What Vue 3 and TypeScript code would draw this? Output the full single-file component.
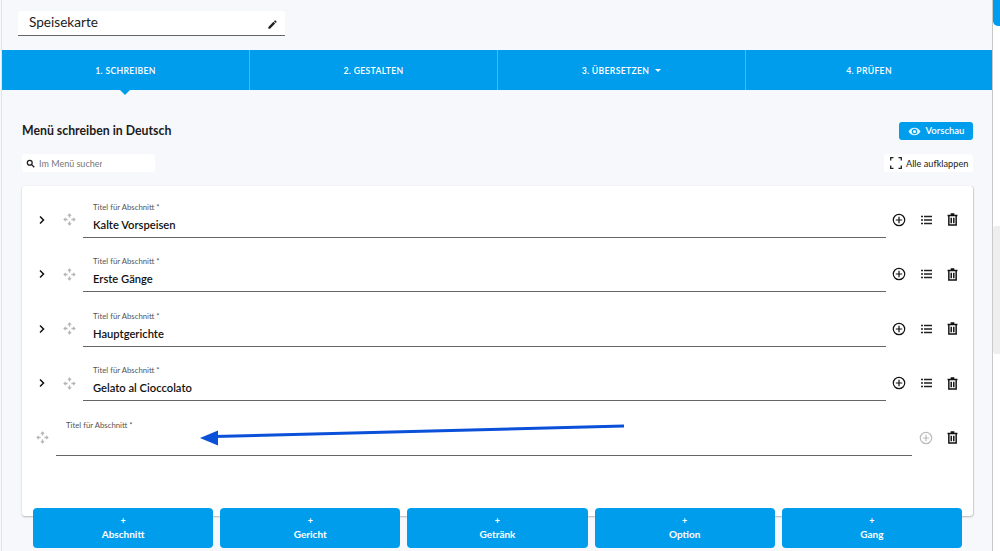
<script setup lang="ts">
const tabs = ['1. SCHREIBEN', '2. GESTALTEN', '3. ÜBERSETZEN', '4. PRÜFEN']
const sections = ['Kalte Vorspeisen', 'Erste Gänge', 'Hauptgerichte', 'Gelato al Cioccolato']
const actions = ['Abschnitt', 'Gericht', 'Getränk', 'Option', 'Gang']
</script>

<template>
  <div class="page">
    <main class="main">
      <div class="title-field">
        <span class="title-text">Speisekarte</span>
        <svg class="pencil" viewBox="0 0 24 24" width="11" height="11"><path d="M3 17.250V21h3.750L17.810 9.940l-3.750-3.750L3 17.250zM20.710 7.040a1 1 0 0 0 0-1.410l-2.340-2.340a1 1 0 0 0-1.410 0l-1.830 1.830 3.750 3.750 1.830-1.830z" fill="#222"/></svg>
      </div>

      <nav class="tabs">
        <div v-for="(t, i) in tabs" :key="t" class="tab">
          {{ t }}
          <i v-if="i === 2" class="caret"></i>
          <i v-if="i === 0" class="pointer"></i>
        </div>
      </nav>

      <div class="head-row">
        <h1>Menü schreiben in Deutsch</h1>
        <button class="preview">
          <svg viewBox="0 0 24 24" width="13" height="13"><path d="M12 5C7 5 3 8 1 12c2 4 6 7 11 7s9-3 11-7c-2-4-6-7-11-7zm0 12a5 5 0 1 1 0-10 5 5 0 0 1 0 10zm0-8a3 3 0 1 0 0 6 3 3 0 0 0 0-6z" fill="#e4f5fe"/></svg>
          <span class="lift">Vorschau</span>
        </button>
      </div>

      <div class="tool-row">
        <div class="search">
          <svg viewBox="0 0 24 24" width="9" height="9"><circle cx="10" cy="10" r="6.500" fill="none" stroke="#222" stroke-width="3.400"/><path d="M15 15l7 7" stroke="#222" stroke-width="3.600"/></svg>
          <span class="search-text">Im Menü suchen</span>
        </div>
        <div class="expand">
          <svg viewBox="0 0 12 12" width="12" height="12"><path d="M.7 3.500V.7h2.800M8.500.7h2.800v2.800M11.300 8.500v2.800H8.500M3.500 11.300H.7V8.500" fill="none" stroke="#222" stroke-width="1.300"/></svg>
          Alle aufklappen
        </div>
      </div>

      <section class="card">
        <div v-for="s in sections" :key="s" class="row">
          <svg class="chev" viewBox="0 0 8 10" width="8" height="10"><path d="M2 1.500l3.500 3.500-3.500 3.500" fill="none" stroke="#111" stroke-width="1.500"/></svg>
          <svg class="move" viewBox="0 0 14 14" width="13" height="13"><path d="M7 .3L4.600 2.900h1.600v2h1.600v-2h1.600zM7 13.700l-2.400-2.600h1.600v-2h1.600v2h1.600zM.3 7l2.600-2.400v1.600h2v1.600h-2v1.600zM13.700 7l-2.600-2.400v1.600h-2v1.600h2v1.600z" fill="#b4b4b4"/></svg>
          <div class="field">
            <label>Titel für Abschnitt *</label>
            <div class="value">{{ s }}</div>
          </div>
          <svg class="ic plus" viewBox="0 0 14 14" width="14" height="14"><circle cx="7" cy="7" r="5.700" fill="none" stroke="#111" stroke-width="1.200"/><path d="M7 3.800v6.400M3.800 7h6.400" stroke="#111" stroke-width="1.200"/></svg>
          <svg class="ic list" viewBox="0 0 12 10" width="12" height="10"><path d="M1 1.500h2M4 1.500h8M1 5h2M4 5h8M1 8.500h2M4 8.500h8" stroke="#222" stroke-width="1.500"/></svg>
          <svg class="ic trash" viewBox="0 0 12 14" width="11" height="13"><path d="M4 1h4M.6 2.600h10.800M2 3v9.900h8V3M4.600 5v6M7.400 5v6" fill="none" stroke="#111" stroke-width="1.600"/></svg>
        </div>

        <div class="row new">
          <svg class="move" viewBox="0 0 14 14" width="13" height="13"><path d="M7 .3L4.600 2.900h1.600v2h1.600v-2h1.600zM7 13.700l-2.400-2.600h1.600v-2h1.600v2h1.600zM.3 7l2.600-2.400v1.600h2v1.600h-2v1.600zM13.700 7l-2.600-2.400v1.600h-2v1.600h2v1.600z" fill="#b4b4b4"/></svg>
          <div class="field">
            <label>Titel für Abschnitt *</label>
            <div class="value"></div>
          </div>
          <svg class="ic plus" viewBox="0 0 14 14" width="14" height="14"><circle cx="7" cy="7" r="5.700" fill="none" stroke="#bbb" stroke-width="1.200"/><path d="M7 3.800v6.400M3.800 7h6.400" stroke="#bbb" stroke-width="1.200"/></svg>
          <svg class="ic trash" viewBox="0 0 12 14" width="11" height="13"><path d="M4 1h4M.6 2.600h10.800M2 3v9.900h8V3M4.600 5v6M7.400 5v6" fill="none" stroke="#111" stroke-width="1.600"/></svg>
        </div>
      </section>

      <div class="actions">
        <button v-for="a in actions" :key="a" class="action">
          <span class="p">+</span>
          <span>{{ a }}</span>
        </button>
      </div>

      <svg class="arrow" viewBox="0 0 440 26" width="440" height="26">
        <path d="M424 6L14 16.500" stroke="#0a50d8" stroke-width="3" fill="none"/>
        <path d="M0 18L18 10.500v15z" fill="#0a50d8"/>
      </svg>
    </main>
    <aside class="side"><div class="thumb"></div><div class="track"></div></aside>
  </div>
</template>

<style>
html, body { margin: 0; background: #f6f8fb; overflow: hidden; }
</style>

<style scoped>
.page {
  width: 1000px; height: 551px; display: flex; overflow: hidden;
  font-family: Lato, "Noto Sans", sans-serif; color: #1c1c1c;
}
.main {
  position: relative; width: 990px; margin-left: 2px; background: #f7f8fb;
  flex: none; box-sizing: border-box; height: 551px;
  box-shadow: -1px 0 0 #e3e3e3;
}
.side { flex: 1; display: flex; flex-direction: column; background: #fff; border-left: 1px solid #c9c9c9; box-sizing: border-box; }
.thumb { height: 26px; background: #009ded; border-radius: 0 0 0 5px; }
.track { margin-top: 200px; height: 128px; background: #eeeeee; border-radius: 3px 0 0 3px; }

.title-field {
  margin: 11px 0 0 16px; width: 267px; height: 25px; box-sizing: border-box;
  background: #fff; border-bottom: 1px solid #666; border-radius: 3px 3px 0 0;
  padding: 0 7px 0 11px; display: flex; justify-content: space-between; align-items: center;
  font-size: 13.600px;
}
.title-text { margin-top: -3px; }
.pencil { margin-top: 2px; }
.tabs { margin-top: 14px; height: 40px; display: flex; background: #009ded; }
.tab {
  position: relative; width: 248px; flex: none; display: flex; align-items: center; justify-content: center;
  color: #fff; font-size: 8.700px; letter-spacing: .3px; font-weight: 600;
  border-right: 1px solid #4db8f0; box-sizing: border-box; padding-top: 1px;
}
.tab:last-child { border-right: 0; flex: 1; width: auto; }
.caret { margin-left: 6px; border: 3px solid transparent; border-top-color: #fff; border-bottom: 0; }
.pointer {
  position: absolute; left: 118px; top: 100%;
  border: 5px solid transparent; border-top-color: #009ded; border-bottom: 0;
}
.head-row { display: flex; justify-content: space-between; align-items: center; margin: 32px 19px 0 20px; height: 18px; }
h1 { margin: -2px 0 0; font-size: 12.300px; font-weight: 700; }
.preview {
  width: 74px; height: 18px; border: 0; border-radius: 3px; background: #009ded; color: #fff;
  font: 600 9.500px Lato, sans-serif; display: flex; align-items: center; justify-content: center; gap: 5px; padding: 0;
}
.lift { margin-top: -2px; }
.tool-row { display: flex; justify-content: space-between; margin: 14px 19px 0 20px; height: 18px; }
.search {
  width: 133px; background: #fff; border-radius: 3px; display: flex; align-items: center; gap: 4px; padding-left: 4px;
  box-sizing: border-box; font-size: 9px; color: #777;
}
.search-text { width: 63px; overflow: hidden; white-space: nowrap; }
.expand {
  width: 89px; background: #fff; border-radius: 3px; display: flex; align-items: center; gap: 4px; padding-left: 6px;
  box-sizing: border-box; font-size: 9.200px; color: #222;
}
.card {
  margin: 14px 19px 0 20px; height: 330px; box-sizing: border-box; background: #fff;
  border-radius: 3px; box-shadow: 0 1px 2px rgba(0,0,0,.25), 1px 0 1px rgba(0,0,0,.1); padding-top: 5px;
}
.row { display: flex; align-items: center; height: 54.500px; padding-left: 16px; }
.row > svg { position: relative; top: 1.500px; }
.row .chev { flex: none; }
.row .move { flex: none; margin-left: 17px; }
.field { width: 803px; margin-left: 7px; height: 39px; box-sizing: border-box; border-bottom: 1px solid #666; padding-left: 10px; }
.field label { display: block; font-size: 7.800px; color: #555; line-height: 10px; margin-top: 3px; }
.value { font-size: 11.200px; font-weight: 600; line-height: 16px; margin-top: 5px; color: #111; }
.ic { flex: none; }
.plus { margin-left: 6px; }
.list { margin-left: 14px; }
.trash { margin-left: 15px; }
.new { padding-left: 14px; }
.new .move { margin-left: 0; }
.new .field { width: 856px; margin-left: 7px; }
.new .plus { margin-left: 7px; }
.new .trash { margin-left: 14px; }
.actions { position: relative; margin: -8px 0 0 31px; display: flex; gap: 7px; }
.action {
  width: 180.200px; height: 40px; border: 0; border-radius: 4px; background: #009ded; color: #fff;
  font: 700 10px Lato, sans-serif; display: flex; flex-direction: column; align-items: center; justify-content: center; gap: 2px; padding: 0;
}
.action .p { font-size: 9px; line-height: 10px; }
.arrow { position: absolute; left: 198px; top: 420px; }
</style>
